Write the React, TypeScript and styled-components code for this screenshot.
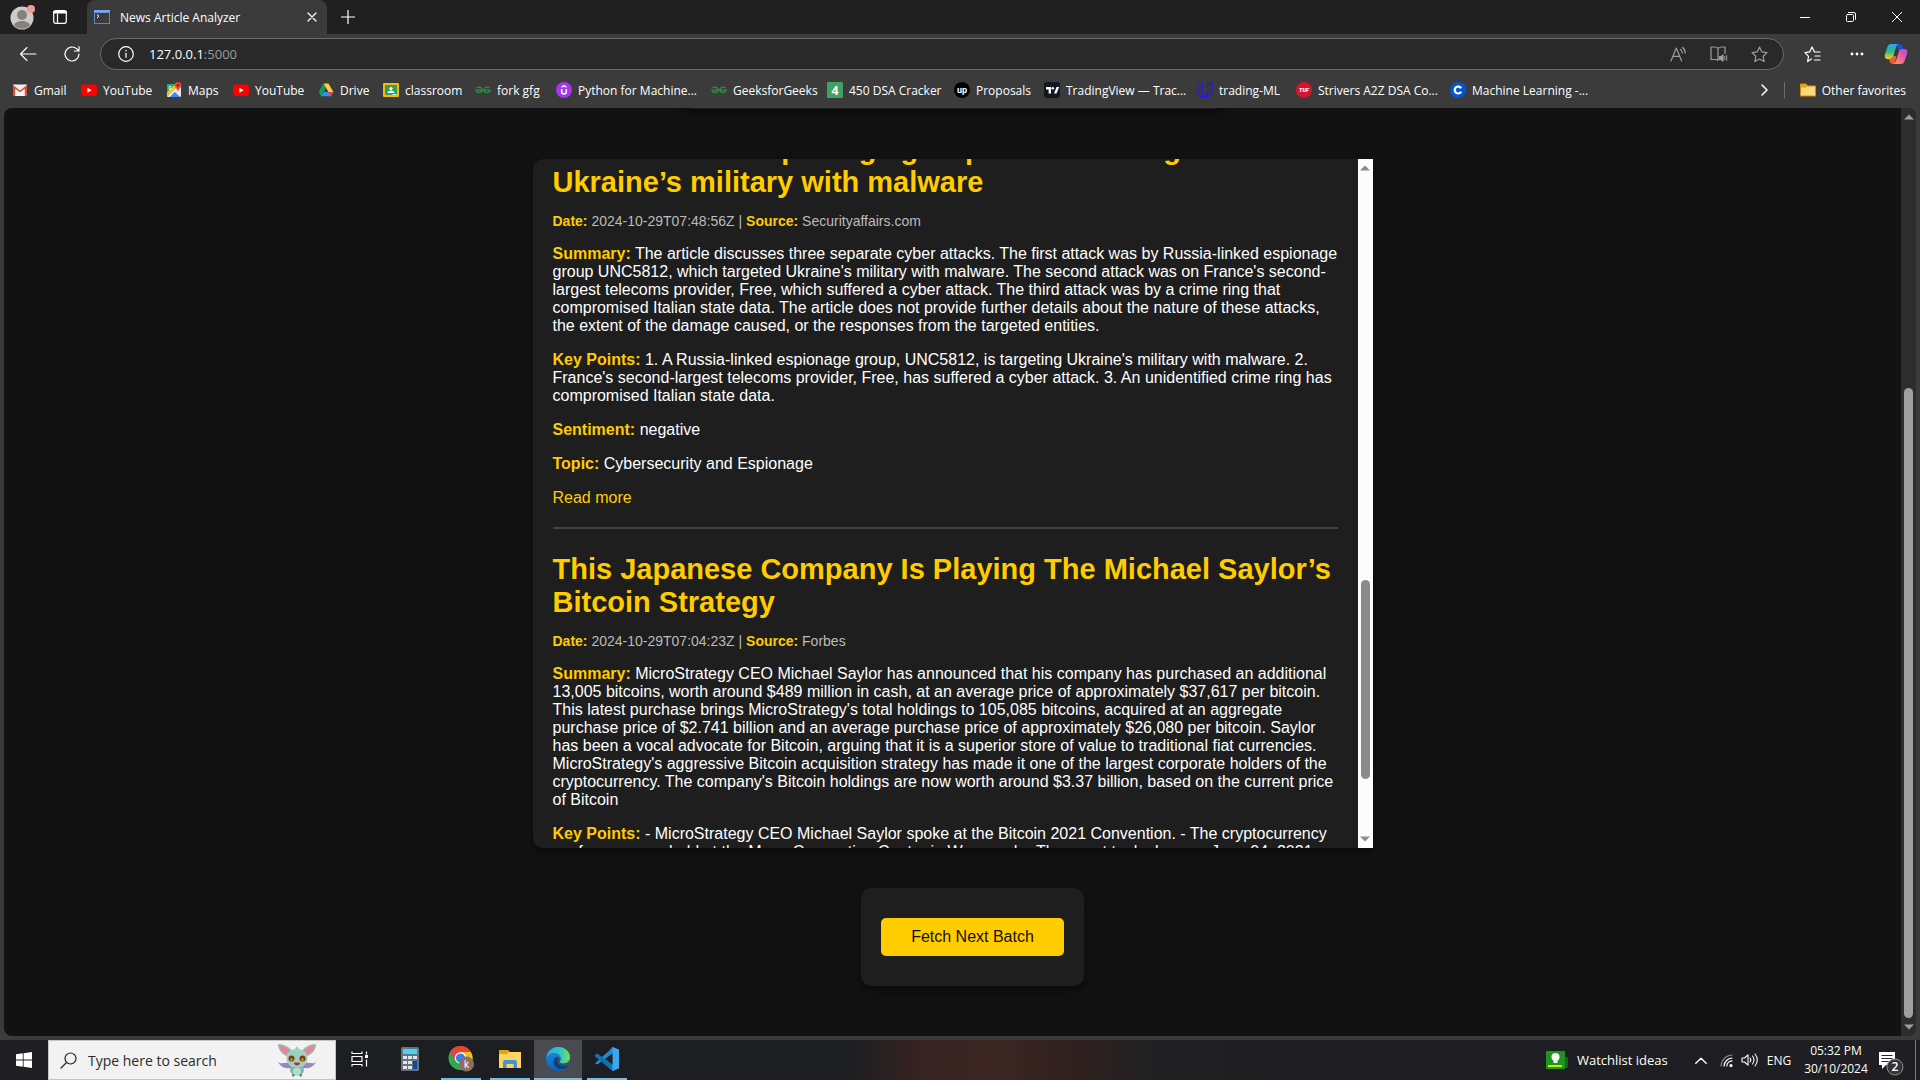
import React, { useLayoutEffect, useRef } from 'react';
import styled, { createGlobalStyle, css } from 'styled-components';

const uiFont = '"Open Sans", "Noto Sans", sans-serif';
const pageFont = 'Arial, "Liberation Sans", sans-serif';

const GlobalStyle = createGlobalStyle`
  *, *::before, *::after { box-sizing: border-box; }
  body { margin: 0; background: #3b3b3b; font-family: ${uiFont}; overflow: hidden; }
  button, input { font: inherit; color: inherit; border: 0; background: none; padding: 0; margin: 0; outline: none; }
  a { color: inherit; text-decoration: none; }
  svg { display: block; flex: none; }
`;

const Desktop = styled.div`
  display: flex;
  flex-direction: column;
  height: 100vh;
`;

const Browser = styled.div`
  flex: 1;
  min-height: 0;
  display: flex;
  flex-direction: column;
  background: #3b3b3b;
  color: #fff;
  font-size: 12px;
`;

const TabStrip = styled.header`
  display: flex;
  align-items: stretch;
  height: 34px;
  background: #202020;
`;

const StripTools = styled.div`
  display: flex;
  align-items: center;
  gap: 17px;
  width: 87px;
  padding-left: 10px;
`;

const IconButton = styled.button<{ $w?: number }>`
  display: flex;
  align-items: center;
  justify-content: center;
  width: ${(p) => (p.$w ? `${p.$w}px` : 'auto')};
  flex: none;
`;

const Tab = styled.div`
  display: flex;
  align-items: center;
  width: 240px;
  padding: 0 10px 0 7px;
  gap: 10px;
  background: #3b3b3b;
  border-radius: 8px 8px 0 0;
`;

const TabTitle = styled.span`
  flex: 1;
  white-space: nowrap;
`;

const WindowControls = styled.div`
  display: flex;
  margin-left: auto;
`;

const Toolbar = styled.div`
  display: flex;
  align-items: center;
  height: 40px;
  padding-left: 6px;
`;

const AddressBar = styled.div`
  display: flex;
  align-items: center;
  flex: 1;
  height: 32px;
  margin-left: 6px;
  padding: 0 4px 0 17px;
  border: 1px solid #6a6a6a;
  border-radius: 16px;
  background: #292929;
`;

const Url = styled.span`
  flex: 1;
  margin-left: 15px;
  font-size: 13px;
  color: #fff;
`;

const UrlPort = styled.span`
  color: #9a9a9a;
`;

const AddressActions = styled.span`
  display: flex;
  align-items: center;
  color: #9d9d9d;
`;

const ToolbarActions = styled.div`
  display: flex;
  align-items: center;
`;

const Bookmarks = styled.nav`
  display: flex;
  align-items: center;
  height: 34px;
  padding: 0 14px 2px 12px;
`;

const Bookmark = styled.a<{ $w?: number }>`
  display: flex;
  align-items: center;
  gap: 6px;
  flex: none;
  width: ${(p) => (p.$w ? `${p.$w}px` : 'auto')};
  white-space: nowrap;
`;

const BookmarkEnd = styled.div`
  display: flex;
  align-items: center;
  gap: 15px;
  margin-left: auto;
`;

const Separator = styled.span`
  width: 1px;
  height: 16px;
  background: #6b6b6b;
`;

const Viewport = styled.div`
  flex: 1;
  min-height: 0;
  display: flex;
  margin: 0 4px 4px;
  border-radius: 8px;
  overflow: hidden;
  background: #121212;
`;

const Page = styled.main`
  flex: 1;
  min-width: 0;
  display: flex;
  flex-direction: column;
  align-items: center;
  padding-bottom: 50px;
  font-family: ${pageFont};
  font-size: 16px;
  line-height: 18px;
`;

const card = css`
  background: #1e1e1e;
  border-radius: 10px;
  box-shadow: 0 4px 10px rgba(0, 0, 0, 0.5);
`;

const HeroCard = styled.div`
  ${card}
  flex: none;
  width: 540px;
  height: 40px;
  margin: -39px 0 50px;
`;

const Feed = styled.section`
  ${card}
  flex: 1;
  min-height: 0;
  display: flex;
  width: 100%;
  max-width: 840px;
  margin-bottom: 40px;
  border-radius: 10px 0 0 10px;
`;

const FeedScroll = styled.div`
  flex: 1;
  min-width: 0;
  overflow: hidden;
  padding: 0 20px;
`;

const Article = styled.article`
  padding-bottom: 20px;
  border-bottom: 2px solid #444;
`;

const Title = styled.h2`
  margin: 0;
  padding: 24px 0 14px;
  font-size: 29px;
  line-height: 33px;
  font-weight: bold;
  color: #ffcc00;
`;

const Meta = styled.p`
  margin: 0;
  font-size: 14px;
  line-height: 16px;
  color: #bbb;
`;

const Text = styled.p`
  margin: 16px 0;
  color: #fff;
`;

const Label = styled.strong`
  color: #ffcc00;
`;

const ReadMore = styled.a`
  display: inline-block;
  color: #ffcc00;
`;

const BarTrack = styled.div<{ $light?: boolean }>`
  display: flex;
  flex-direction: column;
  align-items: center;
  flex: none;
  width: 15px;
  background: ${(p) => (p.$light ? '#fcfcfc' : '#2d2d2d')};
  color: ${(p) => (p.$light ? '#8b8b8b' : '#9f9f9f')};
`;

const BarButton = styled.button`
  display: flex;
  align-items: center;
  justify-content: center;
  width: 15px;
  height: 18px;
  color: inherit;
`;

const BarLane = styled.div`
  flex: 1;
  display: flex;
  flex-direction: column;
`;

const BarSpace = styled.div<{ $grow: number }>`
  flex: ${(p) => p.$grow} 0 0;
`;

const BarThumb = styled.div<{ $grow: number }>`
  flex: ${(p) => p.$grow} 0 0;
  width: 9px;
  border-radius: 5px;
  background: currentColor;
`;

const FetchCard = styled.div`
  ${card}
  flex: none;
  margin-left: 40px;
  padding: 30px 20px;
`;

const FetchButton = styled.button`
  display: block;
  padding: 10px 30px;
  width: 183px;
  border-radius: 5px;
  background: #ffcc00;
  color: #121212;
  white-space: nowrap;
`;

const Taskbar = styled.footer`
  display: flex;
  align-items: stretch;
  height: 40px;
  color: #fff;
  font-size: 15px;
  background: linear-gradient(90deg, #1e1e23 0, #1c1e22 44%, #372321 48%, #3b2622 52%, #30201f 56%, #212123 60%, #1d1d22 70%, #1e1e23 100%);
`;

const StartButton = styled(IconButton)`
  padding-right: 1px;
`;

const SearchBox = styled.label`
  display: flex;
  align-items: center;
  width: 288px;
  padding: 0 18px 0 11px;
  border: 1px solid #c4c4c4;
  background: #f2f2f2;
  color: #2b2b2b;
`;

const SearchInput = styled.input`
  flex: 1;
  min-width: 0;
  margin-left: 11px;
  font-size: 14px;
  &::placeholder { color: #2b2b2b; opacity: 1; }
`;

const Apps = styled.div`
  display: flex;
  align-items: stretch;
`;

const AppButton = styled.button<{ $running?: boolean; $active?: boolean; $w?: number }>`
  display: flex;
  align-items: center;
  justify-content: center;
  width: ${(p) => p.$w ?? 49}px;
  border-bottom: 2px solid transparent;
  background: ${(p) =>
    p.$active
      ? 'linear-gradient(#76b9ed, #76b9ed) center bottom / 48px 2px no-repeat border-box, #4a4b50 padding-box'
      : p.$running
        ? 'linear-gradient(#76b9ed, #76b9ed) center bottom / 40px 2px no-repeat border-box'
        : 'none'};
`;

const Tray = styled.div`
  display: flex;
  align-items: center;
  margin-left: auto;
`;

const NewsButton = styled.button`
  display: flex;
  align-items: center;
  gap: 9px;
  width: 140px;
  font-size: 13px;
  white-space: nowrap;
`;

const Language = styled.button`
  width: 34px;
  font-size: 12px;
`;

const Clock = styled.time`
  width: 72px;
  margin-left: 4px;
  text-align: center;
  font-size: 12px;
  line-height: 18px;
`;

const Notices = styled(IconButton)`
  margin: 0 11px 0 6px;
  padding-top: 5px;
`;

const ShowDesktop = styled.button`
  width: 5px;
  height: 40px;
  border-left: 1px solid #77777b;
`;

type Draw = { children: React.ReactNode; w?: number; h?: number; box?: string };
const Stroke = ({ children, w = 16, h = 16, box }: Draw) => (
  <svg width={w} height={h} viewBox={box ?? `0 0 ${w} ${h}`} fill="none" stroke="currentColor" strokeWidth="1.2" strokeLinecap="round" strokeLinejoin="round" aria-hidden="true">{children}</svg>
);
const Fill = ({ children, w = 16, h = 16, box }: Draw) => (
  <svg width={w} height={h} viewBox={box ?? `0 0 ${w} ${h}`} aria-hidden="true">{children}</svg>
);

const YouTube = () => <Fill><rect y="2.5" width="16" height="11.5" rx="3" fill="#f00" /><path d="M6.4 5.8v5l4.2-2.5z" fill="#fff" /></Fill>;
const Gmail = () => (
  <Fill>
    <path d="M1 2.5h14v11.5H1z" fill="#eee" />
    <path d="M1 14V3l7 5.5L15 3v11h-2.4V7L8 10.5 3.4 7v7z" fill="#dd4b39" />
    <path d="M3.4 14V7L8 10.5 12.6 7v7z" fill="#f3f3f3" />
  </Fill>
);
const Maps = () => (
  <Fill>
    <rect x="1" y="2" width="14" height="13" rx="1.5" fill="#e8e8e8" />
    <path d="M1 3.5A1.500 1.500 0 0 1 2.500 2H10L1 11z" fill="#34a853" />
    <path d="M1 10.500 9 3l3 3-9 9h-.5A1.500 1.500 0 0 1 1 13.500z" fill="#fbc02d" />
    <path d="M3 15 8.500 9.500 14 15z" fill="#4285f4" />
    <path d="M2 14.500 11.500 5l1 1L3.500 15z" fill="#fff" />
    <path d="M12 0a3.300 3.300 0 0 0-3.300 3.300C8.700 5.800 11.400 6.500 12 10c.6-3.500 3.300-4.200 3.300-6.700A3.300 3.300 0 0 0 12 0z" fill="#ea4335" />
    <circle cx="12" cy="3.300" r="1.200" fill="#8c1d18" />
    <text x="2.500" y="7.500" fontSize="5" fontWeight="700" fill="#fff" fontFamily="Roboto">G</text>
  </Fill>
);
const Drive = () => (
  <Fill>
    <path d="M5.500 1.500 0.700 10l2.400 4.200L8 6z" fill="#0f9d58" />
    <path d="M5.500 1.500h5L15.400 10h-4.900z" fill="#ffcd40" />
    <path d="M3.100 14.200h9.700L15.400 10H5.600z" fill="#4285f4" />
    <path d="M12.800 14.200 10.500 10h4.900z" fill="#ea4335" />
  </Fill>
);
const Classroom = () => (
  <Fill>
    <rect y="1" width="16" height="14" rx="1" fill="#f6b90c" />
    <rect x="2" y="3" width="12" height="10" fill="#2fa05a" />
    <circle cx="8" cy="6.500" r="1.600" fill="#fff" /><path d="M4.500 11c0-3.400 7-3.400 7 0z" fill="#fff" />
    <rect x="9.500" y="12" width="4" height="1" fill="#d9f0e0" />
  </Fill>
);
const Gfg = () => (
  <Fill><g fill="none" stroke="#2f8d46" strokeWidth="1.300"><path d="M1.500 5.800c2.500-1.500 5.500-.3 5.500 2.300 0 3.300-5.500 3.300-6 0h14c-.5 3.300-6 3.300-6 0 0-2.600 3-3.800 5.500-2.300" /></g></Fill>
);
const Udemy = () => (
  <Fill><circle cx="8" cy="8" r="8" fill="#a435f0" /><path d="M5.700 7v2.800c0 3 4.600 3 4.600 0V7" fill="none" stroke="#fff" strokeWidth="1.600" /><path d="M5.500 5.200 8 3.500l2.500 1.700" fill="none" stroke="#fff" strokeWidth="1.300" /></Fill>
);
const Four = () => <Fill><rect width="16" height="16" rx="1" fill="#3fa162" /><text x="8" y="13" textAnchor="middle" fontSize="13" fontWeight="700" fill="#fff" fontFamily="Roboto">4</text></Fill>;
const Upwork = () => <Fill><circle cx="8" cy="8" r="8" fill="#000" /><text x="8" y="10.500" textAnchor="middle" fontSize="9" fontWeight="700" fill="#fff" fontFamily="Roboto">up</text></Fill>;
const TView = () => <Fill><rect width="16" height="16" rx="2.500" fill="#131722" /><path d="M2 5h5v6.500H4.600V7.500H2zM10 11.500 12.500 5h2.700l-2.700 6.500z" fill="#fff" /><circle cx="8.800" cy="6.200" r="1.250" fill="#fff" /></Fill>;
const Udacity = () => <Fill><path d="M.8 3 5 .8v9c0 3 3.500 4.600 5.600 2.500V2.500L15 .8v9.200c0 6.500-14.200 8-14.200-.5zM10.600 11.500C9.800 14.500 7 15.600 4.500 14.300" fill="none" stroke="#2015ff" strokeWidth="1.200" /></Fill>;
const Tuf = () => <Fill><circle cx="8" cy="8" r="8" fill="#d5152c" /><text x="8" y="10" textAnchor="middle" fontSize="5.500" fontWeight="900" fontStyle="italic" fill="#fff" fontFamily="Roboto">TUF</text></Fill>;
const Coursera = () => <Fill><circle cx="8" cy="8" r="8" fill="#0056d2" /><path d="M11.200 6.200a3.500 3.500 0 1 0 0 3.600" fill="none" stroke="#fff" strokeWidth="2.200" /></Fill>;

const bookmarks = [
  { name: 'Gmail', icon: <Gmail />, w: 69 },
  { name: 'YouTube', icon: <YouTube />, w: 85 },
  { name: 'Maps', icon: <Maps />, w: 67 },
  { name: 'YouTube', icon: <YouTube />, w: 85 },
  { name: 'Drive', icon: <Drive />, w: 65 },
  { name: 'classroom', icon: <Classroom />, w: 92 },
  { name: 'fork gfg', icon: <Gfg />, w: 81 },
  { name: 'Python for Machine...', icon: <Udemy />, w: 155 },
  { name: 'GeeksforGeeks', icon: <Gfg />, w: 116 },
  { name: '450 DSA Cracker', icon: <Four />, w: 127 },
  { name: 'Proposals', icon: <Upwork />, w: 90 },
  { name: 'TradingView — Trac...', icon: <TView />, w: 153 },
  { name: 'trading-ML', icon: <Udacity />, w: 99 },
  { name: 'Strivers A2Z DSA Co...', icon: <Tuf />, w: 154 },
  { name: 'Machine Learning -...', icon: <Coursera /> },
];

const articles = [
  {
    title: 'Russia-linked espionage group UNC5812 targets Ukraine’s military with malware',
    date: '2024-10-29T07:48:56Z',
    source: 'Securityaffairs.com',
    summary:
      "The article discusses three separate cyber attacks. The first attack was by Russia-linked espionage group UNC5812, which targeted Ukraine's military with malware. The second attack was on France's second-largest telecoms provider, Free, which suffered a cyber attack. The third attack was by a crime ring that compromised Italian state data. The article does not provide further details about the nature of these attacks, the extent of the damage caused, or the responses from the targeted entities.",
    points:
      "1. A Russia-linked espionage group, UNC5812, is targeting Ukraine's military with malware. 2. France's second-largest telecoms provider, Free, has suffered a cyber attack. 3. An unidentified crime ring has compromised Italian state data.",
    sentiment: 'negative',
    topic: 'Cybersecurity and Espionage',
  },
  {
    title: 'This Japanese Company Is Playing The Michael Saylor’s Bitcoin Strategy',
    date: '2024-10-29T07:04:23Z',
    source: 'Forbes',
    summary:
      "MicroStrategy CEO Michael Saylor has announced that his company has purchased an additional 13,005 bitcoins, worth around $489 million in cash, at an average price of approximately $37,617 per bitcoin. This latest purchase brings MicroStrategy's total holdings to 105,085 bitcoins, acquired at an aggregate purchase price of $2.741 billion and an average purchase price of approximately $26,080 per bitcoin. Saylor has been a vocal advocate for Bitcoin, arguing that it is a superior store of value to traditional fiat currencies. MicroStrategy's aggressive Bitcoin acquisition strategy has made it one of the largest corporate holders of the cryptocurrency. The company's Bitcoin holdings are now worth around $3.37 billion, based on the current price of Bitcoin",
    points:
      '- MicroStrategy CEO Michael Saylor spoke at the Bitcoin 2021 Convention. - The cryptocurrency conference was held at the Mana Convention Center in Wynwood. - The event took place on June 04, 2021.',
  },
];

const Scrollbar = ({ light, before, thumb, after }: { light?: boolean; before: number; thumb: number; after: number }) => (
  <BarTrack $light={light}>
    <BarButton aria-label="Scroll up"><Fill w={10} h={6}><path d="M0 5.500 5 .5l5 5z" fill="currentColor" /></Fill></BarButton>
    <BarLane><BarSpace $grow={before} /><BarThumb $grow={thumb} /><BarSpace $grow={after} /></BarLane>
    <BarButton aria-label="Scroll down"><Fill w={10} h={6}><path d="M0 .5 5 5.500l5-5z" fill="currentColor" /></Fill></BarButton>
  </BarTrack>
);

const NewsFeed = () => {
  const scroller = useRef<HTMLDivElement>(null);
  useLayoutEffect(() => {
    if (scroller.current) scroller.current.scrollTop = 50;
  }, []);
  return (
    <Feed>
      <FeedScroll ref={scroller}>
        {articles.map((a) => (
          <Article key={a.date}>
            <Title>{a.title}</Title>
            <Meta><Label>Date:</Label> {a.date} | <Label>Source:</Label> {a.source}</Meta>
            <Text><Label>Summary:</Label> {a.summary}</Text>
            <Text><Label>Key Points:</Label> {a.points}</Text>
            {a.sentiment && <Text><Label>Sentiment:</Label> {a.sentiment}</Text>}
            {a.topic && <Text><Label>Topic:</Label> {a.topic}</Text>}
            {a.topic && <ReadMore href="#read">Read more</ReadMore>}
          </Article>
        ))}
      </FeedScroll>
      <Scrollbar light before={403} thumb={199} after={51} />
    </Feed>
  );
};

export default function App() {
  return (
    <Desktop>
      <GlobalStyle />
      <Browser>
        <TabStrip>
          <StripTools>
            <IconButton aria-label="Profile">
              <Fill w={26} h={28}>
                <circle cx="12" cy="15" r="11.500" fill="#cfccc7" />
                <circle cx="12" cy="12" r="5" fill="#85827e" /><path d="M4 22.500c1-6 15-6 16 0a11.500 11.500 0 0 1-16 0z" fill="#85827e" />
                <circle cx="21" cy="6" r="4" fill="#f49a94" />
              </Fill>
            </IconButton>
            <IconButton aria-label="Tab actions">
              <Stroke w={14} h={14}><rect x=".7" y=".7" width="12.600" height="12.600" rx="2" /><path d="M1 2.300h12" strokeWidth="2.400" /><path d="M4.500 4v9" /></Stroke>
            </IconButton>
          </StripTools>
          <Tab>
            <Fill>
              <rect y="1" width="16" height="14" fill="#5b87c9" /><rect y="1" width="16" height="2.500" fill="#7ba7e6" />
              <rect x="1" y="4" width="14" height="10" fill="#3b3b3d" /><path d="m3 5.500 2 1.700-2 1.700" stroke="#fff" fill="none" />
            </Fill>
            <TabTitle>News Article Analyzer</TabTitle>
            <IconButton aria-label="Close tab"><Stroke w={10} h={10}><path d="m1 1 8 8M9 1 1 9" /></Stroke></IconButton>
          </Tab>
          <IconButton aria-label="New tab" $w={42}><Stroke w={14} h={14}><path d="M7 0v14M0 7h14" /></Stroke></IconButton>
          <WindowControls>
            <IconButton aria-label="Minimize" $w={46}><Stroke w={10} h={10}><path d="M0 5.500h10" strokeWidth="1" /></Stroke></IconButton>
            <IconButton aria-label="Restore" $w={46}><Stroke w={10} h={10}><rect x=".5" y="2.500" width="7" height="7" rx="1" strokeWidth="1" /><path d="M2.500.5H8a1.500 1.500 0 0 1 1.500 1.500v5.500" strokeWidth="1" /></Stroke></IconButton>
            <IconButton aria-label="Close" $w={46}><Stroke w={10} h={10}><path d="m0 0 10 10M10 0 0 10" strokeWidth="1" /></Stroke></IconButton>
          </WindowControls>
        </TabStrip>

        <Toolbar>
          <IconButton aria-label="Back" $w={44}><Stroke w={18} h={16}><path d="M17 8H1.500M8 1.500 1.500 8 8 14.500" strokeWidth="1.100" /></Stroke></IconButton>
          <IconButton aria-label="Refresh" $w={44}><Stroke w={18} h={18}><path d="M16 9a7 7 0 1 1-2.200-5.100L16 6M16 1.500V6h-4.500" /></Stroke></IconButton>
          <AddressBar>
            <Stroke w={16} h={16}><circle cx="8" cy="8" r="7.300" /><path d="M8 7.300v4" /><path d="M8 4.700v.1" strokeWidth="1.600" /></Stroke>
            <Url>127.0.0.1<UrlPort>:5000</UrlPort></Url>
            <AddressActions>
              <IconButton aria-label="Read aloud" $w={40}><Stroke w={18} h={16}><path d="M1 15 6.300 2l5.300 13M3 10.300h6.700M10.500 3.500c1.200.8 1.800 2 1.800 3.500M12.500 1.500c1.800 1.200 2.700 3 2.700 5.500" /></Stroke></IconButton>
              <IconButton aria-label="Immersive reader" $w={40}><Stroke w={18} h={16}><path d="M8 2.500C7.500 1.500 6 1 4.500 1H1v12.500h3.500c1.500 0 3 .3 3.500 1M8 14.500v-12C8.500 1.500 10 1 11.500 1H15v6.500" /><path d="M9.500 10.700h1.300L13 9v6l-2.200-1.500H9.500z" fill="currentColor" /><path d="M14.800 10.500v3M16.700 9.500v5" strokeWidth="1" /></Stroke></IconButton>
              <IconButton aria-label="Add to favorites" $w={40}><Stroke w={17} h={17}><path d="m8.500 1 2.300 4.900 5.200.7-3.800 3.700.9 5.300-4.600-2.600-4.600 2.600.9-5.300L1 6.600l5.200-.7z" /></Stroke></IconButton>
            </AddressActions>
          </AddressBar>
          <ToolbarActions>
            <IconButton aria-label="Favorites" $w={57}><Stroke w={17} h={17}><path d="M10.500 6 8 1 5.700 5.900l-4.700.7 3.500 3.700-.9 5.300L7.500 13M10.500 6H16M11 10h5M10.500 14H16" /></Stroke></IconButton>
            <IconButton aria-label="Settings and more" $w={31}><Fill w={14} h={4}><g fill="#fff"><circle cx="2" cy="2" r="1.400" /><circle cx="7" cy="2" r="1.400" /><circle cx="12" cy="2" r="1.400" /></g></Fill></IconButton>
            <IconButton aria-label="Copilot" $w={48}>
              <Fill w={24} h={22}>
                <defs>
                  <linearGradient id="cpa" x1="0" y1="0" x2="0" y2="1"><stop offset="0" stopColor="#25a8f5" /><stop offset=".5" stopColor="#35b88b" /><stop offset="1" stopColor="#f2d51f" /></linearGradient>
                  <linearGradient id="cpb" x1="1" y1="0" x2="0" y2="1"><stop offset="0" stopColor="#a349f5" /><stop offset=".5" stopColor="#f0609a" /><stop offset="1" stopColor="#ffa34d" /></linearGradient>
                </defs>
                <path d="M13 1h2.500a3 3 0 0 1 2.800 2.200L19.500 7H14z" fill="#1a4fd0" />
                <path d="M7 1h8c-1.800 0-2.400 1.300-3 3.200L9.300 13c-.6 2-1.500 3-3.500 3H3.500C.8 16 .3 13.500 1 11L3.500 3.700C4.100 1.900 5.200 1 7 1z" fill="url(#cpa)" />
                <path d="M11 21H8.500a3 3 0 0 1-2.800-2.200L5 16c3 0 3.800-1 4.300-3h3z" fill="#f25a35" />
                <path d="M17 21H9c1.800 0 2.400-1.300 3-3.200L14.700 9c.6-2 1.500-3 3.500-3h2.300c2.700 0 3.200 2.500 2.500 5l-2.500 7.300C19.900 20.100 18.800 21 17 21z" fill="url(#cpb)" />
              </Fill>
            </IconButton>
          </ToolbarActions>
        </Toolbar>

        <Bookmarks aria-label="Favorites bar">
          {bookmarks.map((b, i) => (
            <Bookmark href="#bookmark" key={i} $w={b.w}>{b.icon}<span>{b.name}</span></Bookmark>
          ))}
          <BookmarkEnd>
            <IconButton aria-label="More favorites"><Stroke w={8} h={12}><path d="m1 1 5 5-5 5" strokeWidth="1.500" /></Stroke></IconButton>
            <Separator />
            <Bookmark href="#other">
              <Fill><path d="M.5 2h5.500l1.500 2h8v10H.5z" fill="#ffd977" stroke="#c9930e" /><path d="M.5 2h5.500l1.500 2L6 5.500H.5z" fill="#e0a51b" /></Fill>
              <span>Other favorites</span>
            </Bookmark>
          </BookmarkEnd>
        </Bookmarks>

        <Viewport>
          <Page>
            <HeroCard />
            <NewsFeed />
            <FetchCard><FetchButton>Fetch Next Batch</FetchButton></FetchCard>
          </Page>
          <Scrollbar before={262} thumb={630} after={0} />
        </Viewport>
      </Browser>

      <Taskbar>
        <StartButton aria-label="Start" $w={48}><Fill><path d="M0 2.300 6.800 1.300v6.300H0zM7.600 1.200 16 0v7.600H7.600zM0 8.400h6.800v6.300L0 13.700zM7.600 8.400H16V16l-8.400-1.200z" fill="#fff" /></Fill></StartButton>
        <SearchBox>
          <Stroke w={17} h={17}><circle cx="10.500" cy="6.500" r="5.500" stroke="#222" /><path d="M6.500 10.500 1 16" stroke="#222" /></Stroke>
          <SearchInput type="text" aria-label="Search" placeholder="Type here to search" />
          <Fill w={40} h={34} box="0 0 40 34">
            <path d="M14 25C10 26 4 25 1 19c4 3 7-1 13 2zM26 25c4 1 10 0 13-6-4 3-7-1-13 2z" fill="#9a86bd" />
            <path d="M12 14C5 12 1 7 1 1c6 0 12 3 15 8zM28 14c7-2 11-7 11-13-6 0-12 3-15 8z" fill="#8fc0b4" />
            <path d="M11 12C6 10 3 7 2.500 2.500 8 3 12 6 14 9zM29 12c5-2 8-5 8.500-9.500C32 3 28 6 26 9z" fill="#e88594" />
            <ellipse cx="20" cy="27" rx="7" ry="5.500" fill="#7db5ac" /><ellipse cx="20" cy="28.500" rx="4" ry="4" fill="#b5dcd0" />
            <path d="M9.500 15.500c0-7 4.500-8.500 8.500-9.500l2-3 2 3c4 1 8.500 2.500 8.500 9.500 0 6-5 9-10.500 9s-10.500-3-10.500-9z" fill="#9bd0c2" />
            <circle cx="14.500" cy="15.500" r="3" fill="#7a3a14" /><circle cx="25.500" cy="15.500" r="3" fill="#7a3a14" />
            <circle cx="14.500" cy="16.500" r="1.300" fill="#e2902e" /><circle cx="25.500" cy="16.500" r="1.300" fill="#e2902e" />
            <path d="M17 19.500h6c0 4-6 4-6 0z" fill="#b3342f" />
            <path d="M15 33.500v-2.500h2.500v2.500zM22.500 33.500v-2.500H25v2.500z" fill="#5c8f88" />
          </Fill>
        </SearchBox>
        <Apps>
          <AppButton aria-label="Task view" $w={48}><Stroke w={18} h={16}><path d="M1 .5v2h10v-2M1 15.500v-2h10v2M1 5.500h10v5H1zM15.500 .5v3M15.500 8.500v7" strokeLinecap="butt" /><path d="M14 4h3v3h-3z" fill="currentColor" stroke="none" /></Stroke></AppButton>
          <AppButton aria-label="Calculator" $w={52}>
            <Fill w={18} h={24}>
              <rect width="18" height="24" rx="1.500" fill="#66727e" /><rect x="2" y="2" width="14" height="5" fill="#45d3f8" />
              <g fill="#dfe6ec"><path d="M2 9h4v3H2zM7 9h4v3H7zM12 9h4v3h-4zM2 14h4v3H2zM7 14h4v3H7zM2 19h4v3H2zM7 19h4v3H7z" /></g><path d="M12 14h4v8h-4z" fill="#0d4f97" />
            </Fill>
          </AppButton>
          <AppButton aria-label="Chrome" $running>
            <Fill w={26} h={26}>
              <circle cx="12.500" cy="12" r="12" fill="#2da94f" />
              <path d="M22.900 6A12 12 0 0 1 12.500 24l5.200-9z" fill="#fbc116" /><path d="M22.900 6H12.500v6l5.200 3z" fill="#fbc116" />
              <path d="M2.100 6A12 12 0 0 1 22.900 6H12.500L7.300 15z" fill="#ea4335" />
              <circle cx="12.500" cy="12" r="5.800" fill="#fff" /><circle cx="12.500" cy="12" r="4.600" fill="#3b7ded" />
              <circle cx="18.500" cy="18" r="7.500" fill="#8d6e63" /><text x="18.500" y="21.500" textAnchor="middle" fontSize="10" fill="#fff" fontFamily="Roboto">k</text>
            </Fill>
          </AppButton>
          <AppButton aria-label="File Explorer" $running>
            <Fill w={22} h={18}><path d="M0 0h9l2 2h11v16H0z" fill="#e5a50a" /><path d="M0 4h8l2-2h12v16H0z" fill="#ffd55f" /><path d="M4 18v-6a2 2 0 0 1 2-2h10a2 2 0 0 1 2 2v6h-3.500v-4h-7v4z" fill="#3d95dc" /></Fill>
          </AppButton>
          <AppButton aria-label="Edge" $active $w={48}>
            <Fill w={24} h={24}>
              <defs>
                <linearGradient id="eg" x1="0" y1="0" x2="1" y2="0"><stop offset="0" stopColor="#2aa6e8" /><stop offset=".55" stopColor="#2fc4c8" /><stop offset="1" stopColor="#6be35a" /></linearGradient>
                <linearGradient id="eb" x1="0" y1="0" x2="0" y2="1"><stop offset="0" stopColor="#1d92dc" /><stop offset="1" stopColor="#0d5fb8" /></linearGradient>
              </defs>
              <circle cx="12" cy="12" r="12" fill="url(#eb)" />
              <path d="M.2 10.500C1.500 4 6.500 0 12 0c7 0 12 4.700 12 10 0 4-3 6.500-6.500 6.500-2.500 0-4-.9-4-1.800 0-.7 1.400-1.400 1.400-3.400C14.900 8.500 12 6 8.500 6 5 6 1.500 7.800.2 10.500z" fill="url(#eg)" />
              <path d="M8.500 11.500C6 15.500 8.500 21 14 22c4 .6 7-1.300 8.500-4-5 2.300-10.500.5-11-4.200 0-1.700.5-2.600 1.500-3.300-1.500-.5-3.500-.2-4.500 1z" fill="#0a3f80" />
              <path d="M23 16.500c-3.500 3.300-10.500 2.500-11.500-2.700 0-1 .3-2 1-2.800 1 0 2 .6 2.200 1.300-.3 1.300-1.200 1.700-1.200 2.400 0 .9 1.500 1.800 4 1.800 2.200 0 4.200-.7 5.500-2z" fill="#4a4b50" />
            </Fill>
          </AppButton>
          <AppButton aria-label="Visual Studio Code" $running $w={50}>
            <Fill w={24} h={24}><path d="M17.500 0 24 2.800v18.400L17.500 24 7 14l-4.500 3.500L0 16.200 14 3.800z" fill="#2489ca" /><path d="M0 7.800 2.500 6.500 17.500 18v6L0 9.500z" fill="#1070b3" /><path d="M17.500 0 24 2.800v18.400L17.500 24z" fill="#3ba7f0" /><path d="M17.500 6.500v11L10 12z" fill="#1e1e23" /></Fill>
          </AppButton>
        </Apps>
        <Tray>
          <NewsButton>
            <Fill w={22} h={18}><rect x="3" y="6" width="19" height="11" rx="1" fill="#0d6b15" /><rect width="19" height="18" rx="1" fill="#1e9421" /><circle cx="9.500" cy="6" r="4" fill="#fff" /><rect x="7.500" y="8" width="4" height="4" fill="#e8f5e9" /><rect x="2" y="14" width="14" height="2" fill="#c6e51b" /></Fill>
            <span>Watchlist ideas</span>
          </NewsButton>
          <IconButton aria-label="Show hidden icons" $w={30}><Stroke w={12} h={7}><path d="m.8 6.200 5.200-5 5.200 5" strokeWidth="1.400" /></Stroke></IconButton>
          <IconButton aria-label="Network" $w={20}><Stroke w={13} h={13}><path d="M1 12A11.500 11.500 0 0 1 12 1" stroke="#888" /><path d="M4 12a8.500 8.500 0 0 1 8-8M6.800 12A5.500 5.500 0 0 1 12 6.800" /><circle cx="11" cy="11.500" r="1" fill="currentColor" /></Stroke></IconButton>
          <IconButton aria-label="Volume" $w={26}><Stroke w={17} h={14}><path d="M1 5h2.500L7 1.800v10.400L3.500 9H1zM9 5c1 1.200 1 2.800 0 4M11.500 3c2 2.200 2 5.800 0 8M14 1c3 3.400 3 8.600 0 12" strokeWidth="1.100" /></Stroke></IconButton>
          <Language>ENG</Language>
          <Clock>05:32 PM<br />30/10/2024</Clock>
          <Notices aria-label="Notifications, 2 new">
            <Fill w={26} h={26}><path d="M1 2h16v13H8l-4 4v-4H1z" fill="#fff" /><path d="M3.500 5.500h11M3.500 8.500h11M3.500 11.500h7" stroke="#222" /><circle cx="17" cy="17" r="8" fill="#333338" stroke="#8d8d90" /><text x="17" y="21" textAnchor="middle" fontSize="12" fontWeight="600" fill="#fff" fontFamily="Open Sans">2</text></Fill>
          </Notices>
          <ShowDesktop aria-label="Show desktop" />
        </Tray>
      </Taskbar>
    </Desktop>
  );
}
